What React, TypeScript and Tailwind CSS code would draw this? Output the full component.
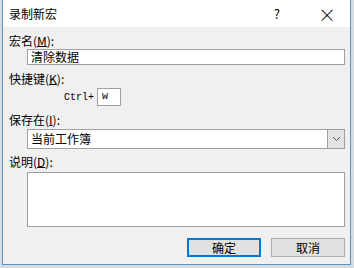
import React from 'react';

const font = { fontFamily: '"SimSun", "Noto Sans CJK SC", "Liberation Sans", sans-serif' };

const U: React.FC<{ c: string }> = ({ c }) => <span className="underline underline-offset-0">{c}</span>;

export default function App() {
  return (
    <div className="w-[354px] h-[268px] bg-[#d5dde3] overflow-hidden" style={font}>
      <div className="ml-[2px] w-[349px] h-[265px] border-x border-b border-[#5b93c2] bg-[#f0f0f0] flex flex-col text-[12px] text-black">
        {/* 标题栏 */}
        <div className="h-[27px] bg-white flex items-center pl-[6px] shrink-0">
          <span className="leading-none">录制新宏</span>
          <span className="ml-auto mr-[38px] text-[13px] leading-none">?</span>
          <span className="mr-[14px] text-[18px] font-light leading-none">×</span>
        </div>

        <div className="flex flex-col pl-[6px] pr-[5px] pt-[7px]">
          <div className="h-[14px] leading-[14px]">宏名(<U c="M" />):</div>
          <div className="mt-[1px] ml-[18px] h-[16px] border border-[#a0a0a0] bg-white pl-[3px] leading-[14px]">清除数据</div>

          <div className="mt-[7px] h-[14px] leading-[14px]">快捷键(<U c="K" />):</div>
          <div className="mt-[2px] h-[18px] flex items-center pl-[55px]">
            <span className="text-[10px] w-[33px]" style={{ fontFamily: '"Liberation Mono", monospace' }}>Ctrl+</span>
            <div className="w-[24px] h-[18px] border border-[#a0a0a0] bg-white text-[10px] leading-[16px] pl-[4px]" style={{ fontFamily: '"Liberation Mono", monospace' }}>w</div>
          </div>

          <div className="mt-[7px] h-[14px] leading-[14px]">保存在(<U c="I" />):</div>
          <div className="mt-[2px] ml-[18px] h-[20px] border border-[#a0a0a0] bg-white flex items-center">
            <span className="pl-[3px]">当前工作簿</span>
            <div className="ml-auto w-[17px] h-full bg-[#e3e3e3] border-l border-[#a0a0a0] flex items-center justify-center">
              <svg width="9" height="6" viewBox="0 0 9 6"><path d="M1 1 L4.5 4.5 L8 1" fill="none" stroke="#555" strokeWidth="1" /></svg>
            </div>
          </div>

          <div className="mt-[6px] h-[14px] leading-[14px]">说明(<U c="D" />):</div>
          <div className="mt-[3px] ml-[18px] h-[55px] border border-[#a0a0a0] bg-white" />

          <div className="mt-[11px] flex justify-end gap-[10px]">
            <button className="w-[74px] h-[19px] border-2 border-[#0078d7] bg-[#e1e1e1] leading-none">确定</button>
            <button className="w-[74px] h-[19px] border border-[#adadad] bg-[#e1e1e1] leading-none">取消</button>
          </div>
        </div>
      </div>
    </div>
  );
}
